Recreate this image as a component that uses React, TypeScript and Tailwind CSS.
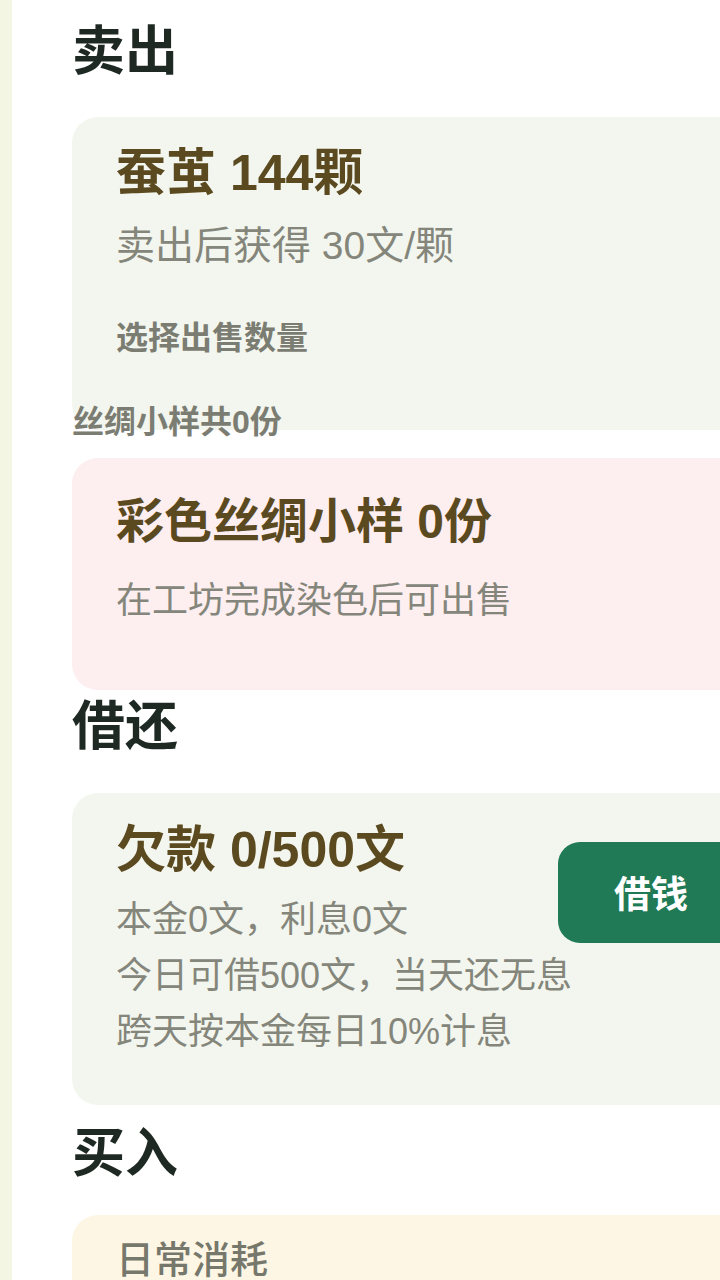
import React from 'react';

const font = { fontFamily: '"Liberation Sans", "Noto Sans CJK SC", sans-serif' };

const SectionTitle = ({ children, className = '' }: { children: React.ReactNode; className?: string }) => (
  <h2 className={`text-[53px] leading-[56px] font-semibold text-[#1f2924] ${className}`}>{children}</h2>
);

export default function App() {
  return (
    <div style={font} className="w-[720px] h-[1280px] overflow-hidden flex bg-white whitespace-nowrap">
      {/* left edge strip */}
      <div className="w-[12px] shrink-0 bg-[#f4f6e4]" />

      <main className="flex-1 pl-[60px] pt-[24px]">
        <SectionTitle>卖出</SectionTitle>

        {/* cocoon card */}
        <section className="mt-[37px] w-[716px] rounded-[26px] bg-[#f3f6ee] pl-[44px] pt-[28px] pb-[70px]">
          <div className="text-[50px] leading-[56px] font-bold text-[#5b4a1f]">蚕茧 144颗</div>
          <div className="mt-[21px] text-[39px] leading-[48px] text-[#85867b]">卖出后获得 30文/颗</div>
          <div className="mt-[46px] text-[32px] leading-[44px] font-bold text-[#7b7d73]">选择出售数量</div>
        </section>

        <div className="-mt-[28px] text-[32px] leading-[40px] font-bold text-[#7b7d73]">丝绸小样共0份</div>

        {/* silk sample card */}
        <section className="mt-[16px] w-[716px] rounded-[26px] bg-[#fdeef0] pl-[44px] pt-[36px] pb-[65px]">
          <div className="text-[48px] leading-[56px] font-bold text-[#5b4a1f]">彩色丝绸小样 0份</div>
          <div className="mt-[27px] text-[36px] leading-[48px] text-[#85867b]">在工坊完成染色后可出售</div>
        </section>

        <SectionTitle className="mt-[9px]">借还</SectionTitle>

        {/* debt card */}
        <section className="mt-[38px] w-[716px] rounded-[26px] bg-[#f3f6ee] px-[44px] pt-[29px] pb-[45px] flex items-start justify-between">
          <div className="w-[442px] shrink-0">
            <div className="text-[50px] leading-[56px] font-bold text-[#5b4a1f]">欠款 0/500文</div>
            <div className="mt-[14px] text-[36px] leading-[56px] text-[#85867b]">
              <div>本金0文，利息0文</div>
              <div>今日可借500文，当天还无息</div>
              <div>跨天按本金每日10%计息</div>
            </div>
          </div>
          <button className="mt-[20px] w-[186px] h-[101px] shrink-0 rounded-[22px] bg-[#1f7a55] pt-[6px] text-white text-[37px] font-bold">
            借钱
          </button>
        </section>

        <SectionTitle className="mt-[21px]">买入</SectionTitle>

        {/* buy card */}
        <section className="mt-[33px] w-[716px] h-[200px] rounded-[26px] bg-[#fdf6e5] pl-[44px] pt-[21px]">
          <div className="text-[38px] leading-[48px] font-medium text-[#77786c]">日常消耗</div>
        </section>
      </main>
    </div>
  );
}
